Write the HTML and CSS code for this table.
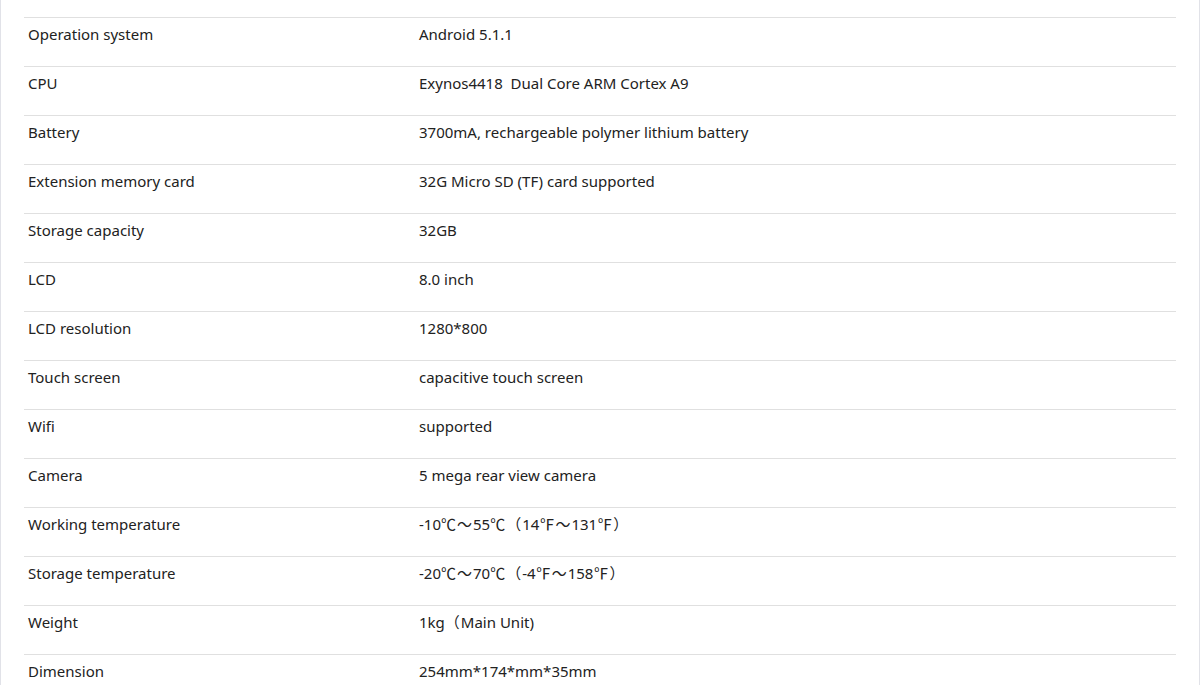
FILE: index.html
```html
<!DOCTYPE html>
<html>
<head>
<meta charset="utf-8">
<link rel="stylesheet" href="styles.css">
</head>
<body>
<div class="page">
  <table class="specs">
    <tr><td class="k">Operation system</td><td class="v">Android 5.1.1</td></tr>
    <tr><td class="k">CPU</td><td class="v">Exynos4418&nbsp; Dual Core ARM Cortex A9</td></tr>
    <tr><td class="k">Battery</td><td class="v">3700mA, rechargeable polymer lithium battery</td></tr>
    <tr><td class="k">Extension memory card</td><td class="v">32G Micro SD (TF) card supported</td></tr>
    <tr><td class="k">Storage capacity</td><td class="v">32GB</td></tr>
    <tr><td class="k">LCD</td><td class="v">8.0 inch</td></tr>
    <tr><td class="k">LCD resolution</td><td class="v">1280*800</td></tr>
    <tr><td class="k">Touch screen</td><td class="v">capacitive touch screen</td></tr>
    <tr><td class="k">Wifi</td><td class="v">supported</td></tr>
    <tr><td class="k">Camera</td><td class="v">5 mega rear view camera</td></tr>
    <tr><td class="k">Working temperature</td><td class="v">-10<span class="cjk">℃～</span>55<span class="cjk">℃（</span>14<span class="cjk">℉～</span>131<span class="cjk">℉）</span></td></tr>
    <tr><td class="k">Storage temperature</td><td class="v">-20<span class="cjk">℃～</span>70<span class="cjk">℃（</span>-4<span class="cjk">℉～</span>158<span class="cjk">℉）</span></td></tr>
    <tr><td class="k">Weight</td><td class="v">1kg<span class="cjk">（</span>Main Unit)</td></tr>
    <tr><td class="k">Dimension</td><td class="v">254mm*174*mm*35mm</td></tr>
  </table>
</div>
</body>
</html>
```
FILE: styles.css
```css
html, body {
  margin: 0;
  padding: 0;
  background: #fff;
}
.page {
  width: 1200px;
  min-height: 685px;
  border-left: 1px solid #e1e2e8;
  border-right: 1px solid #e1e2e8;
  padding: 17px 23px 0 23px;
  box-sizing: border-box;
}
.specs {
  width: 1152px;
  border-collapse: collapse;
  font-family: "Noto Sans", "Noto Sans CJK SC", sans-serif;
  font-size: 15px;
  color: #222;
}
.specs td {
  border-top: 1px solid #e0e0e0;
  height: 48px;
  padding: 6px 4px 22px 4px;
  line-height: 20px;
  vertical-align: top;
  box-sizing: border-box;
}
.specs .k {
  width: 391px;
}
.cjk {
  font-family: "Noto Sans CJK SC", sans-serif;
  letter-spacing: 1px;
}
```
